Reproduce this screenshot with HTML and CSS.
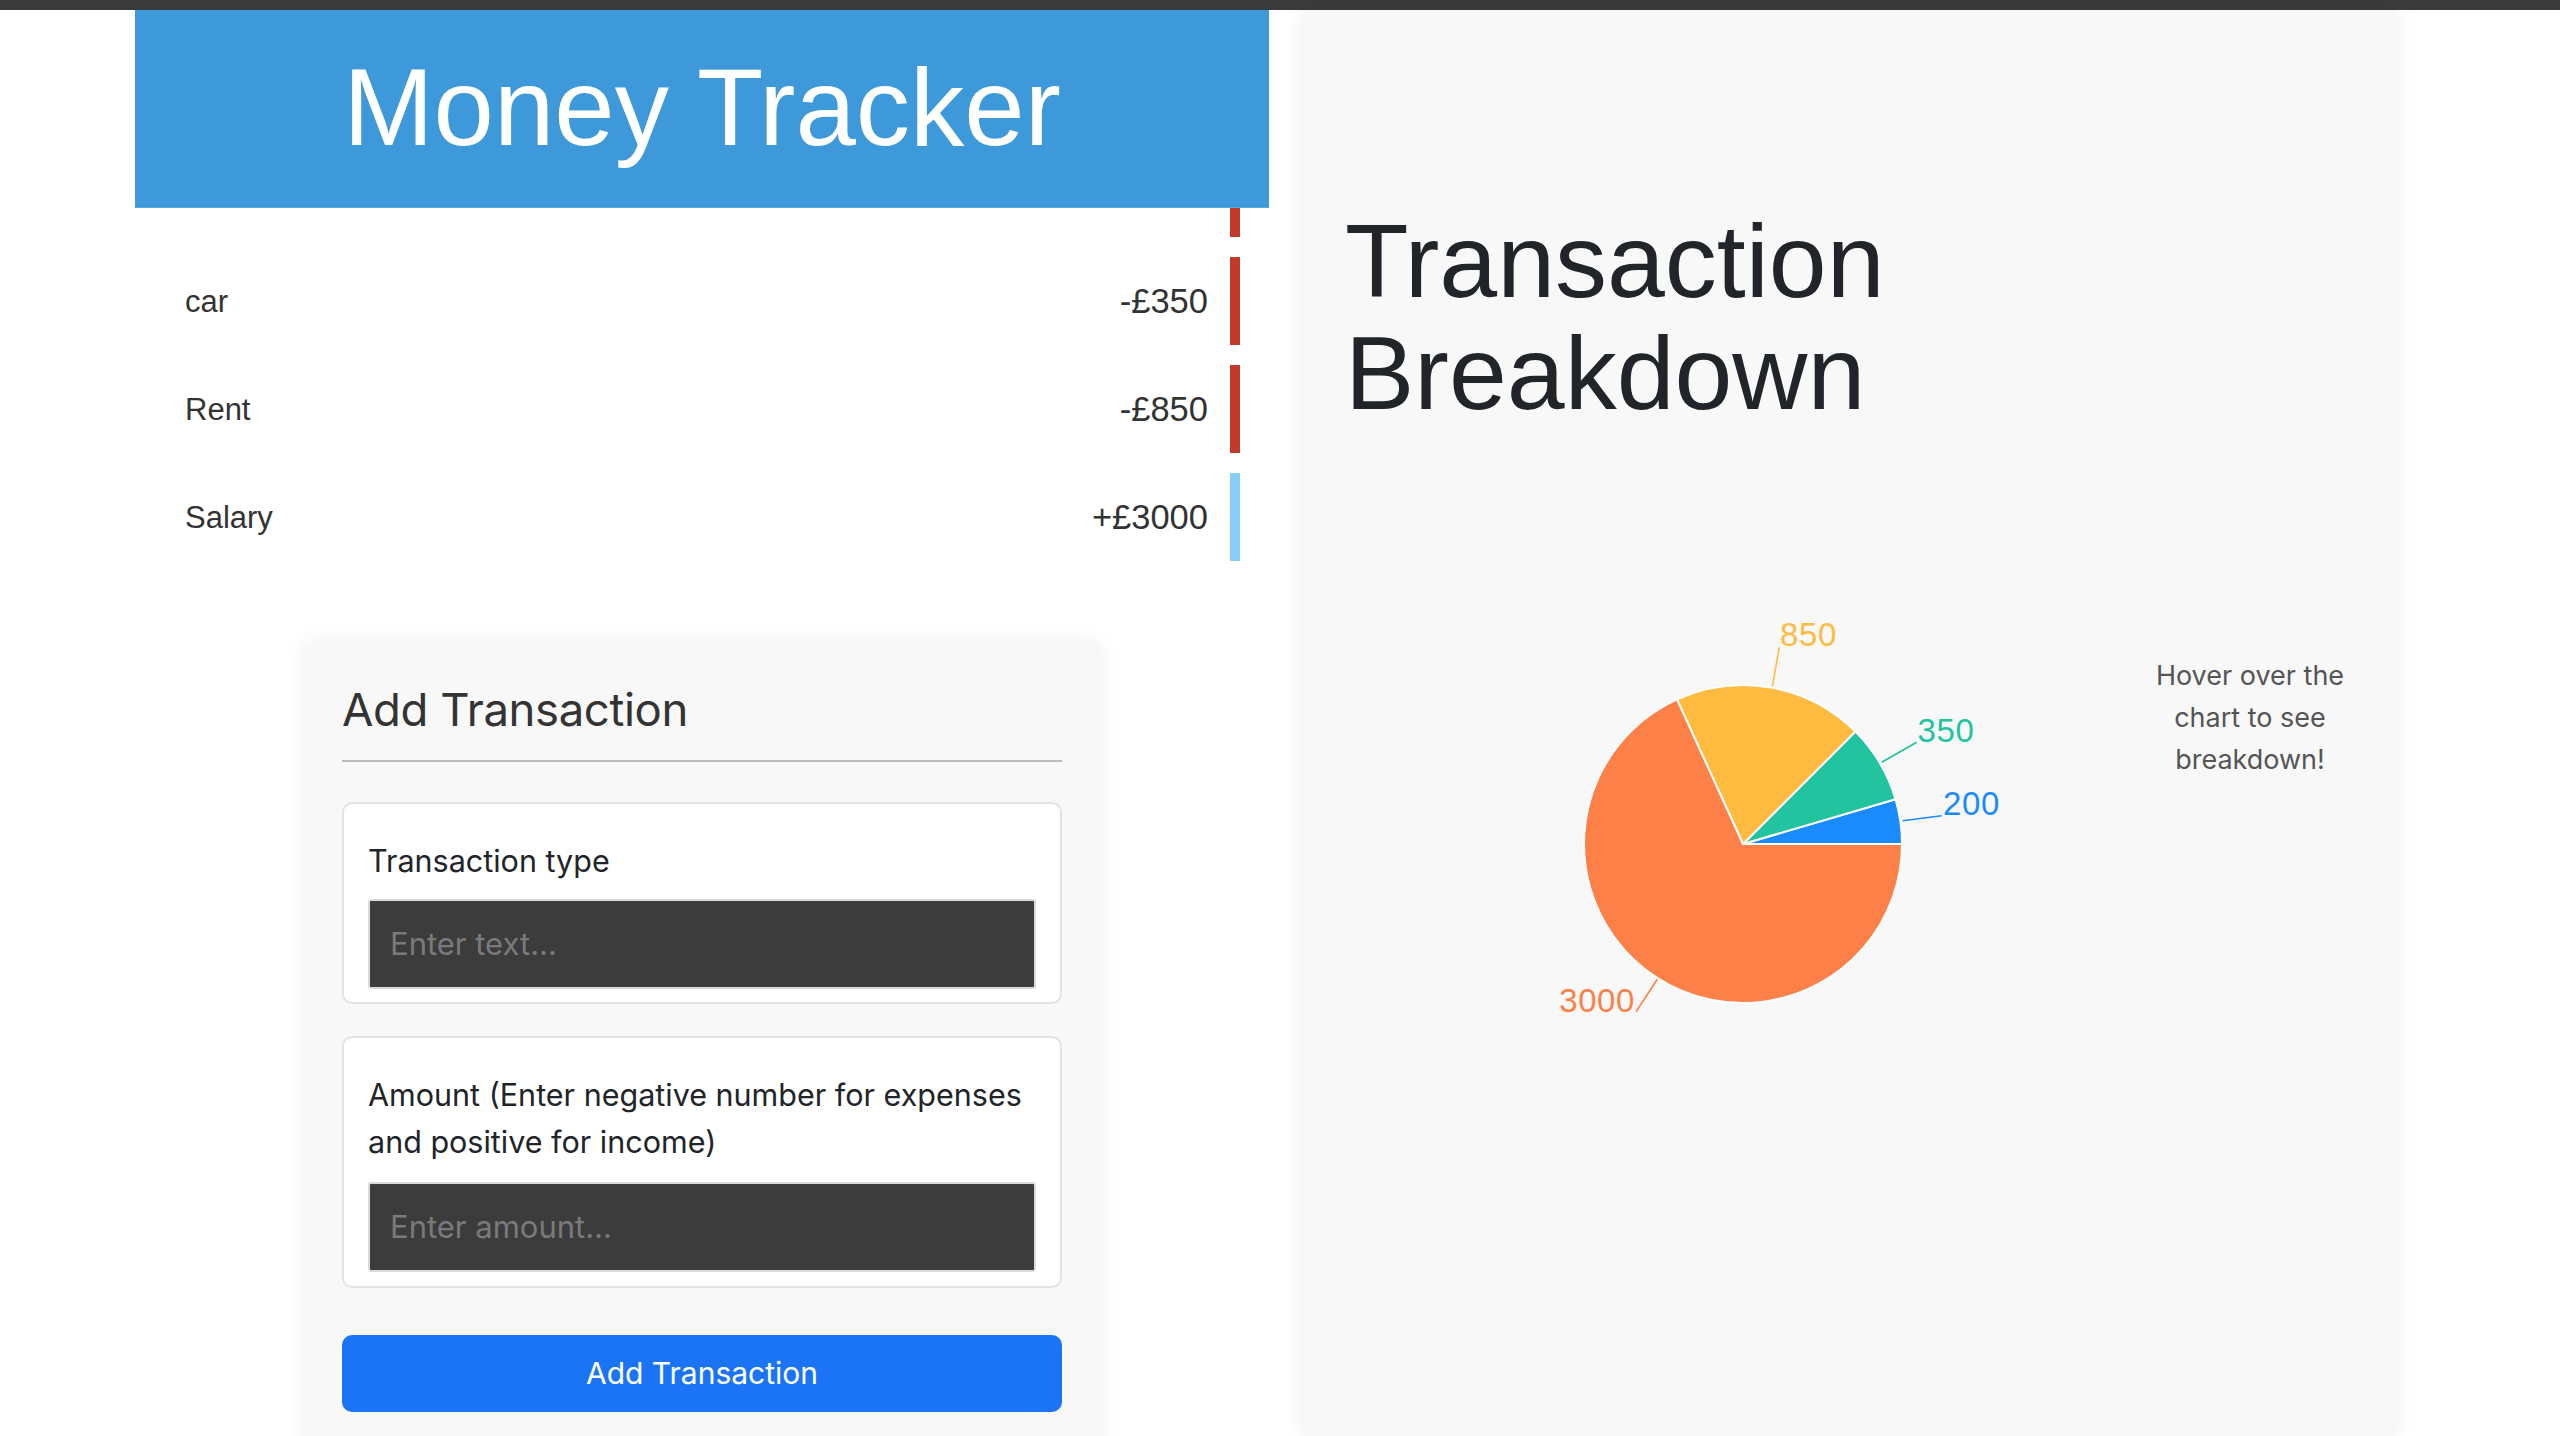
FILE: index.html
```html
<!DOCTYPE html>
<html lang="en">
<head>
<meta charset="utf-8">
<title>Money Tracker</title>
<link rel="stylesheet" href="styles.css">
</head>
<body>
<div class="topbar"></div>
<div class="page">
  <div class="left-col">
    <header class="app-header">
      <h1 class="app-title">Money Tracker</h1>
    </header>
    <ul class="tx-list">
      <li class="tx-item minus"><span class="tx-name">Food</span><span class="tx-amount">-£200</span></li>
      <li class="tx-item minus"><span class="tx-name">car</span><span class="tx-amount">-£350</span></li>
      <li class="tx-item minus"><span class="tx-name">Rent</span><span class="tx-amount">-£850</span></li>
      <li class="tx-item plus"><span class="tx-name">Salary</span><span class="tx-amount">+£3000</span></li>
    </ul>
    <form class="add-card">
      <h2 class="add-title">Add Transaction</h2>
      <hr class="add-rule">
      <div class="field">
        <label class="field-label" for="text">Transaction type</label>
        <input class="field-input" id="text" type="text" placeholder="Enter text...">
      </div>
      <div class="field field-amount">
        <label class="field-label" for="amount">Amount (Enter negative number for expenses and positive for income)</label>
        <input class="field-input" id="amount" type="text" placeholder="Enter amount...">
      </div>
      <button class="add-btn" type="button">Add Transaction</button>
    </form>
  </div>
  <section class="breakdown">
    <h1 class="breakdown-title">Transaction Breakdown</h1>
    <div class="chart-row">
      <svg class="pie" width="600" height="500" viewBox="0 0 600 500">
        <g stroke="#ffffff" stroke-width="2" stroke-linejoin="round">
          <path fill="#198bfd" d="M300,244 L459,244 A159,159 0 0 0 452.57,199.21 Z"/>
          <path fill="#21c49f" d="M300,244 L452.57,199.21 A159,159 0 0 0 412.43,131.57 Z"/>
          <path fill="#febb3f" d="M300,244 L412.43,131.57 A159,159 0 0 0 233.95,99.37 Z"/>
          <path fill="#fe8049" d="M300,244 L233.95,99.37 A159,159 0 1 0 459,244 Z"/>
        </g>
        <g fill="none" stroke-width="1.6">
          <path stroke="#febb3f" d="M329.3,86.7 L336.3,47.3"/>
          <path stroke="#21c49f" d="M438.7,162.3 L473.7,142.3"/>
          <path stroke="#198bfd" d="M459.7,220.7 L498.7,215.7"/>
          <path stroke="#fe8049" d="M214.3,379.3 L193,411.7"/>
        </g>
        <g class="pie-labels">
          <text x="337" y="45.7" fill="#febb3f">850</text>
          <text x="474.5" y="141.7" fill="#21c49f">350</text>
          <text x="500" y="215" fill="#198bfd">200</text>
          <text x="192" y="411.7" fill="#fe8049" text-anchor="end">3000</text>
        </g>
      </svg>
      <p class="hover-hint">Hover over the chart to see breakdown!</p>
    </div>
  </section>
</div>
</body>
</html>
```

FILE: styles.css
```css
* { box-sizing: border-box; }

html, body {
  margin: 0;
  padding: 0;
  background: #ffffff;
}

body {
  font-family: "Liberation Sans", Arial, sans-serif;
  color: #333333;
  overflow: hidden;
  height: 1436px;
}

.topbar {
  height: 10px;
  background: #3b3b3b;
}

.page {
  display: flex;
  gap: 34px;
  padding-left: 135px;
  height: 1426px;
}

.left-col {
  width: 1134px;
  flex-shrink: 0;
}

.app-header {
  position: relative;
  z-index: 2;
  height: 198px;
  background: #3d99d9;
  border-bottom: 1px solid #5aaae2;
  display: flex;
  align-items: center;
  justify-content: center;
}

.app-title {
  margin: 0;
  font-family: "Liberation Sans", Arial, sans-serif;
  font-weight: 400;
  font-size: 108.5px;
  line-height: 1;
  color: #ffffff;
}

.tx-list {
  list-style: none;
  margin: -59px 0 0 0;
  padding: 0 29px 0 20px;
  display: flex;
  flex-direction: column;
  gap: 20px;
}

.tx-item {
  height: 88px;
  display: flex;
  align-items: center;
  justify-content: space-between;
  padding: 1px 22px 0 30px;
  background: #ffffff;
  border-right: 10px solid #c0392b;
  color: #333333;
}

.tx-item.plus {
  border-right-color: #87cefa;
}

.tx-name {
  font-size: 31px;
}

.tx-amount {
  font-size: 34.5px;
}

.add-card {
  width: 800px;
  margin: 80px auto 0;
  padding: 40px;
  background: #f8f8f8;
  border-radius: 12px;
  box-shadow: 0 0 22px rgba(0, 0, 0, 0.06);
  font-family: Inter, "Noto Sans", sans-serif;
}

.add-title {
  margin: 0;
  font-size: 45.5px;
  line-height: 57.6px;
  font-weight: 400;
  letter-spacing: -0.4px;
  color: #333333;
}

.add-rule {
  margin: 21px 0 40px;
  border: 0;
  border-top: 2px solid #bcbcbc;
  height: 0;
}

.field {
  background: #ffffff;
  border: 2px solid #e1e3e6;
  border-radius: 10px;
  padding: 33px 24px 13px;
  margin-bottom: 32px;
}

.field-amount {
  padding-bottom: 14px;
  margin-bottom: 47px;
}

.field-amount .field-label {
  margin-bottom: 17px;
}

.field-label {
  display: block;
  font-size: 30.5px;
  line-height: 47px;
  color: #212529;
  margin-bottom: 15px;
}

.field-input {
  display: block;
  width: 100%;
  height: 90px;
  background: #3c3c3c;
  border: 2px solid #dadada;
  border-radius: 3px;
  padding: 0 20px;
  font-family: Inter, "Noto Sans", sans-serif;
  font-size: 31px;
  color: #ffffff;
  outline: none;
}

.field-input::placeholder {
  color: #7a7a7a;
}

.add-btn {
  display: block;
  width: 100%;
  height: 77px;
  border: 0;
  border-radius: 10px;
  background: #1b74f6;
  color: #ffffff;
  font-family: Inter, "Noto Sans", sans-serif;
  font-size: 30px;
}

.breakdown {
  width: 1093px;
  flex-shrink: 0;
  background: #f8f8f8;
  box-shadow: 0 0 22px rgba(0, 0, 0, 0.07);
  padding: 0 0 0 42px;
}

.breakdown-title {
  margin: 195px 0 0;
  max-width: 1000px;
  font-family: "Liberation Sans", Arial, sans-serif;
  font-weight: 400;
  font-size: 104px;
  line-height: 112px;
  color: #212529;
}

.chart-row {
  display: flex;
  align-items: flex-start;
  margin-top: 171px;
}

.pie {
  flex-shrink: 0;
  margin-left: 98px;
  display: block;
}

.pie-labels {
  font-family: "Liberation Sans", Arial, sans-serif;
  font-size: 33px;
  letter-spacing: 0.6px;
}

.hover-hint {
  flex-shrink: 0;
  width: 220px;
  margin: 55px 0 0 97px;
  font-family: Inter, "Noto Sans", sans-serif;
  font-size: 27px;
  line-height: 42px;
  text-align: center;
  color: #555555;
}
```
